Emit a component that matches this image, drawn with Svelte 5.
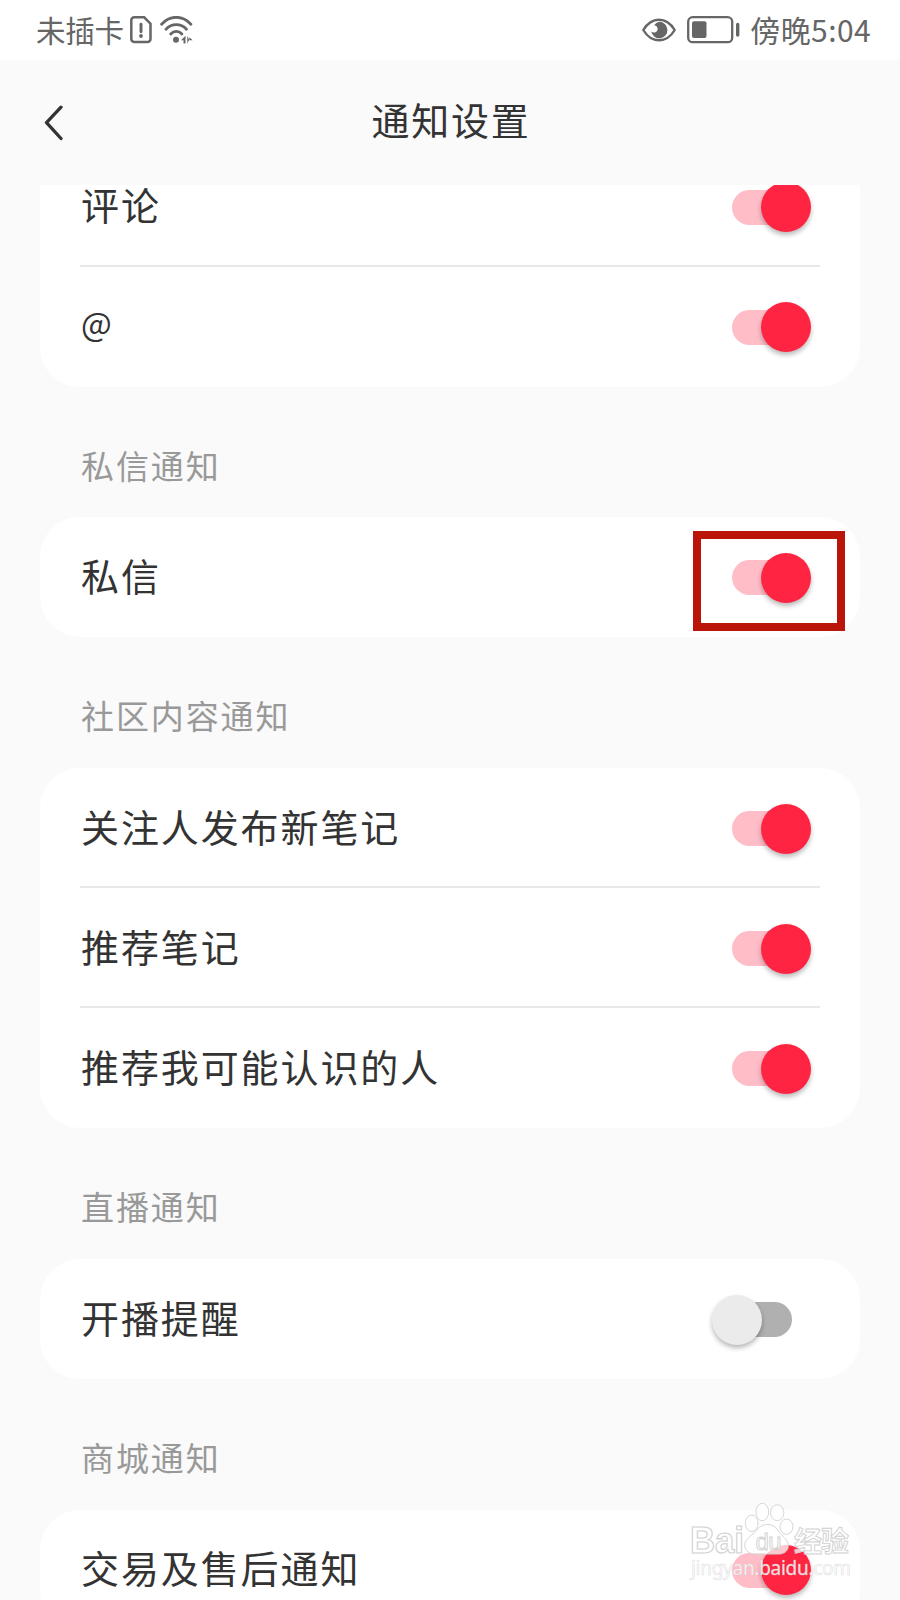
<script lang="ts">
  type Item = { label: string; on: boolean; marked?: boolean };
  type Section = { title: string; items: Item[] };

  let sections = $state<Section[]>([
    {
      title: '',
      items: [
        { label: '评论', on: true },
        { label: '@', on: true }
      ]
    },
    { title: '私信通知', items: [{ label: '私信', on: true, marked: true }] },
    {
      title: '社区内容通知',
      items: [
        { label: '关注人发布新笔记', on: true },
        { label: '推荐笔记', on: true },
        { label: '推荐我可能认识的人', on: true }
      ]
    },
    { title: '直播通知', items: [{ label: '开播提醒', on: false }] },
    { title: '商城通知', items: [{ label: '交易及售后通知', on: true }] }
  ]);
</script>

<div class="screen">
  <div class="status">
    <div class="side">
      <span class="carrier">未插卡</span>
      <svg class="sim" width="22" height="28" viewBox="0 0 22 28">
        <path d="M4.3 1.3h9.9l6.3 6.4V23a3 3 0 0 1-3 3H4.3a3 3 0 0 1-3-3V4.3a3 3 0 0 1 3-3z" fill="none" stroke="#666" stroke-width="2.5" />
        <path d="M11 8.200v7.600" stroke="#666" stroke-width="2.900" stroke-linecap="round" />
        <circle cx="11" cy="20" r="1.900" fill="#666" />
      </svg>
      <svg class="wifi" width="34" height="28" viewBox="0 0 34 28">
        <g fill="none" stroke="#666" stroke-width="2.800" stroke-linecap="round">
          <path d="M1.600 8.200C10-1 22.500-1 30.900 8.200" />
          <path d="M6 13.200c5.700-6.100 14.800-6.100 20.500 0" />
          <path d="M10.700 18c3.300-3.400 7.900-3.400 11.200 0" />
        </g>
        <circle cx="16" cy="23.800" r="3" fill="#666" />
        <path d="M21 24.300l4.500-4.600v7.800h-2V24.300zM27.300 19.700v7.800l1.700-3.200h3.700l-3.400-3v3z" fill="#666" />
      </svg>
    </div>
    <div class="side">
      <svg class="eye" width="34" height="24" viewBox="0 0 34 24">
        <path d="M1.300 12C9.500-1.700 24.500-1.700 32.700 12 24.500 25.700 9.500 25.700 1.300 12z" fill="none" stroke="#666" stroke-width="2.400" stroke-linejoin="round" />
        <path d="M17.200 3.800a8.200 8.200 0 1 1-8 9.800c3 2.200 7.300.2 6.300-3.600-.5-1.800-2-2.600-3.400-2.700a8.200 8.200 0 0 1 5.100-3.500z" fill="#666" />
      </svg>
      <svg class="battery" width="53" height="28" viewBox="0 0 53 28">
        <rect x="1.200" y="1.200" width="44" height="25" rx="4.500" fill="none" stroke="#666" stroke-width="2.300" />
        <rect x="5" y="5.300" width="14.500" height="16.800" rx="2" fill="#666" />
        <path d="M50.700 8.500v10.500" stroke="#666" stroke-width="3.400" stroke-linecap="round" />
      </svg>
      <span class="time">傍晚5:04</span>
    </div>
  </div>

  <header>
    <button class="back" aria-label="返回">
      <svg width="20" height="36" viewBox="0 0 20 36">
        <path d="M17 2.200L2.500 17.700 17 33.500" fill="none" stroke="#333" stroke-width="3.300" stroke-linecap="round" stroke-linejoin="round" />
      </svg>
    </button>
    <h1>通知设置</h1>
  </header>

  <main>
    <div class="list">
      {#each sections as section}
        {#if section.title}
          <h2>{section.title}</h2>
        {/if}
        <section>
          {#each section.items as item}
            <div class="row">
              <span class="label" class:symbol={item.label === '@'}>{item.label}</span>
              <button
                class="switch"
                class:on={item.on}
                role="switch"
                aria-checked={item.on}
                aria-label={item.label}
                onclick={() => (item.on = !item.on)}
              >
                <span class="thumb"></span>
              </button>
              {#if item.marked}
                <div class="mark"></div>
              {/if}
            </div>
          {/each}
        </section>
      {/each}
    </div>
  </main>

  <!-- Watermark over the bottom right corner -->
  <svg class="watermark" width="230" height="110" viewBox="0 0 230 110">
    <g class="ink">
      <text class="bai" x="20" y="63" font-size="36" textLength="54" lengthAdjust="spacingAndGlyphs">Bai</text>
      <text class="cjk" x="124" y="61.500" font-size="28" textLength="55">经验</text>
      <ellipse cx="92.300" cy="22" rx="6.400" ry="8.700" />
      <ellipse cx="107.200" cy="22.700" rx="6.700" ry="7.900" />
      <ellipse cx="81.700" cy="33.300" rx="6.400" ry="8.200" />
      <ellipse cx="116.500" cy="36.700" rx="6.500" ry="7.700" />
      <path d="M98 34.500c6 0 9 4.500 11.500 8 3.500 4.500 8.800 7.500 8.800 13.300 0 5.500-4.500 8.300-10 8.300H86c-6.500 0-11.200-3-11.200-9 0-6 5.500-8 9.500-12.600 3.200-3.700 6.700-8 13.700-8z" />
      <text class="du" x="85.500" y="60" font-size="24" textLength="26">du</text>
    </g>
    <text class="site" x="21" y="84.500" font-size="19" textLength="160">jingyan.baidu.com</text>
  </svg>
</div>

<style>
  :global(body) { background: #fafafa; }

  .screen {
    position: relative;
    display: flex;
    flex-direction: column;
    width: 900px;
    height: 1600px;
    overflow: hidden;
    background: #fafafa;
    color: #333;
    font-family: "Noto Sans CJK SC", "Noto Sans", sans-serif;
  }

  button { padding: 0; border: 0; background: none; cursor: pointer; }

  /* status bar */
  .status { display: flex; flex: none; justify-content: space-between; height: 60px; padding: 0 29px 0 36px; background: #fff; color: #666; font-size: 30px; line-height: 59px; }
  .side { display: flex; }
  .carrier { width: 90px; font-size: 29.500px; letter-spacing: -0.200px; }
  .sim { margin: 16px 0 0 4px; }
  .wifi { margin: 16px 0 0 8px; }
  .eye { margin: 18px 11px 0 0; }
  .battery { margin: 16px 10px 0 0; }
  .time { letter-spacing: 0.400px; }

  /* title bar */
  header { display: grid; flex: none; grid-template-columns: 100px 1fr 100px; align-items: center; height: 125px; }
  .back { height: 36px; padding: 0 0 1px 44px; text-align: left; }
  .back svg { display: block; }
  h1 { margin: 0; padding: 0 0 7px 2px; font-size: 38px; font-weight: 400; letter-spacing: 1.700px; line-height: 56px; text-align: center; }

  /* the list is scrolled, so the first card is cut at the top */
  main { display: flex; flex: 1; flex-direction: column; min-height: 0; padding: 0 40px; overflow: hidden; }
  .list { margin-top: -38.400px; }
  h2 { height: 130.800px; margin: 0; padding-left: 41px; color: #999; font-size: 33px; font-weight: 400; letter-spacing: 1.900px; line-height: 157px; }
  section { border-radius: 40px; background: #fff; }
  .row { position: relative; display: flex; align-items: center; justify-content: space-between; height: 120px; margin: 0 40px; padding-right: 28px; }
  .row:not(:last-child) { box-shadow: inset 0 -2px #e8e8e8; }
  .label { padding: 0 0 5px 1px; font-size: 38px; letter-spacing: 1.900px; line-height: 56px; }
  .symbol { padding-bottom: 10px; font-size: 32.500px; }

  .switch { display: flex; align-items: center; width: 60px; height: 35px; margin-top: 1px; border-radius: 18px; background: #b0b0b0; }
  .thumb { flex: none; width: 50px; height: 50px; margin-left: -20px; border-radius: 50%; background: #ebebeb; box-shadow: 0 3px 5px rgba(0, 0, 0, 0.28); }
  .switch.on { background: #ffbdc8; }
  .switch.on .thumb { margin-left: 29px; background: #ff2442; }

  .mark { position: absolute; top: 14px; right: -25px; box-sizing: border-box; width: 152px; height: 100px; border: 8px solid #bb1509; }

  .watermark { position: absolute; top: 1490px; left: 670px; }
  .ink { fill: rgba(255, 255, 255, 0.75); stroke: #d0d0d0; stroke-width: 0.900; font-family: "Liberation Sans", sans-serif; font-weight: 700; }
  .bai { stroke-width: 1.100; }
  .du { font-weight: 400; }
  .cjk { font-family: "Noto Sans CJK SC", sans-serif; }
  .site { fill: rgba(255, 255, 255, 0.9); stroke: rgba(200, 200, 200, 0.6); stroke-width: 0.600; font-family: "Noto Sans", sans-serif; }
</style>
